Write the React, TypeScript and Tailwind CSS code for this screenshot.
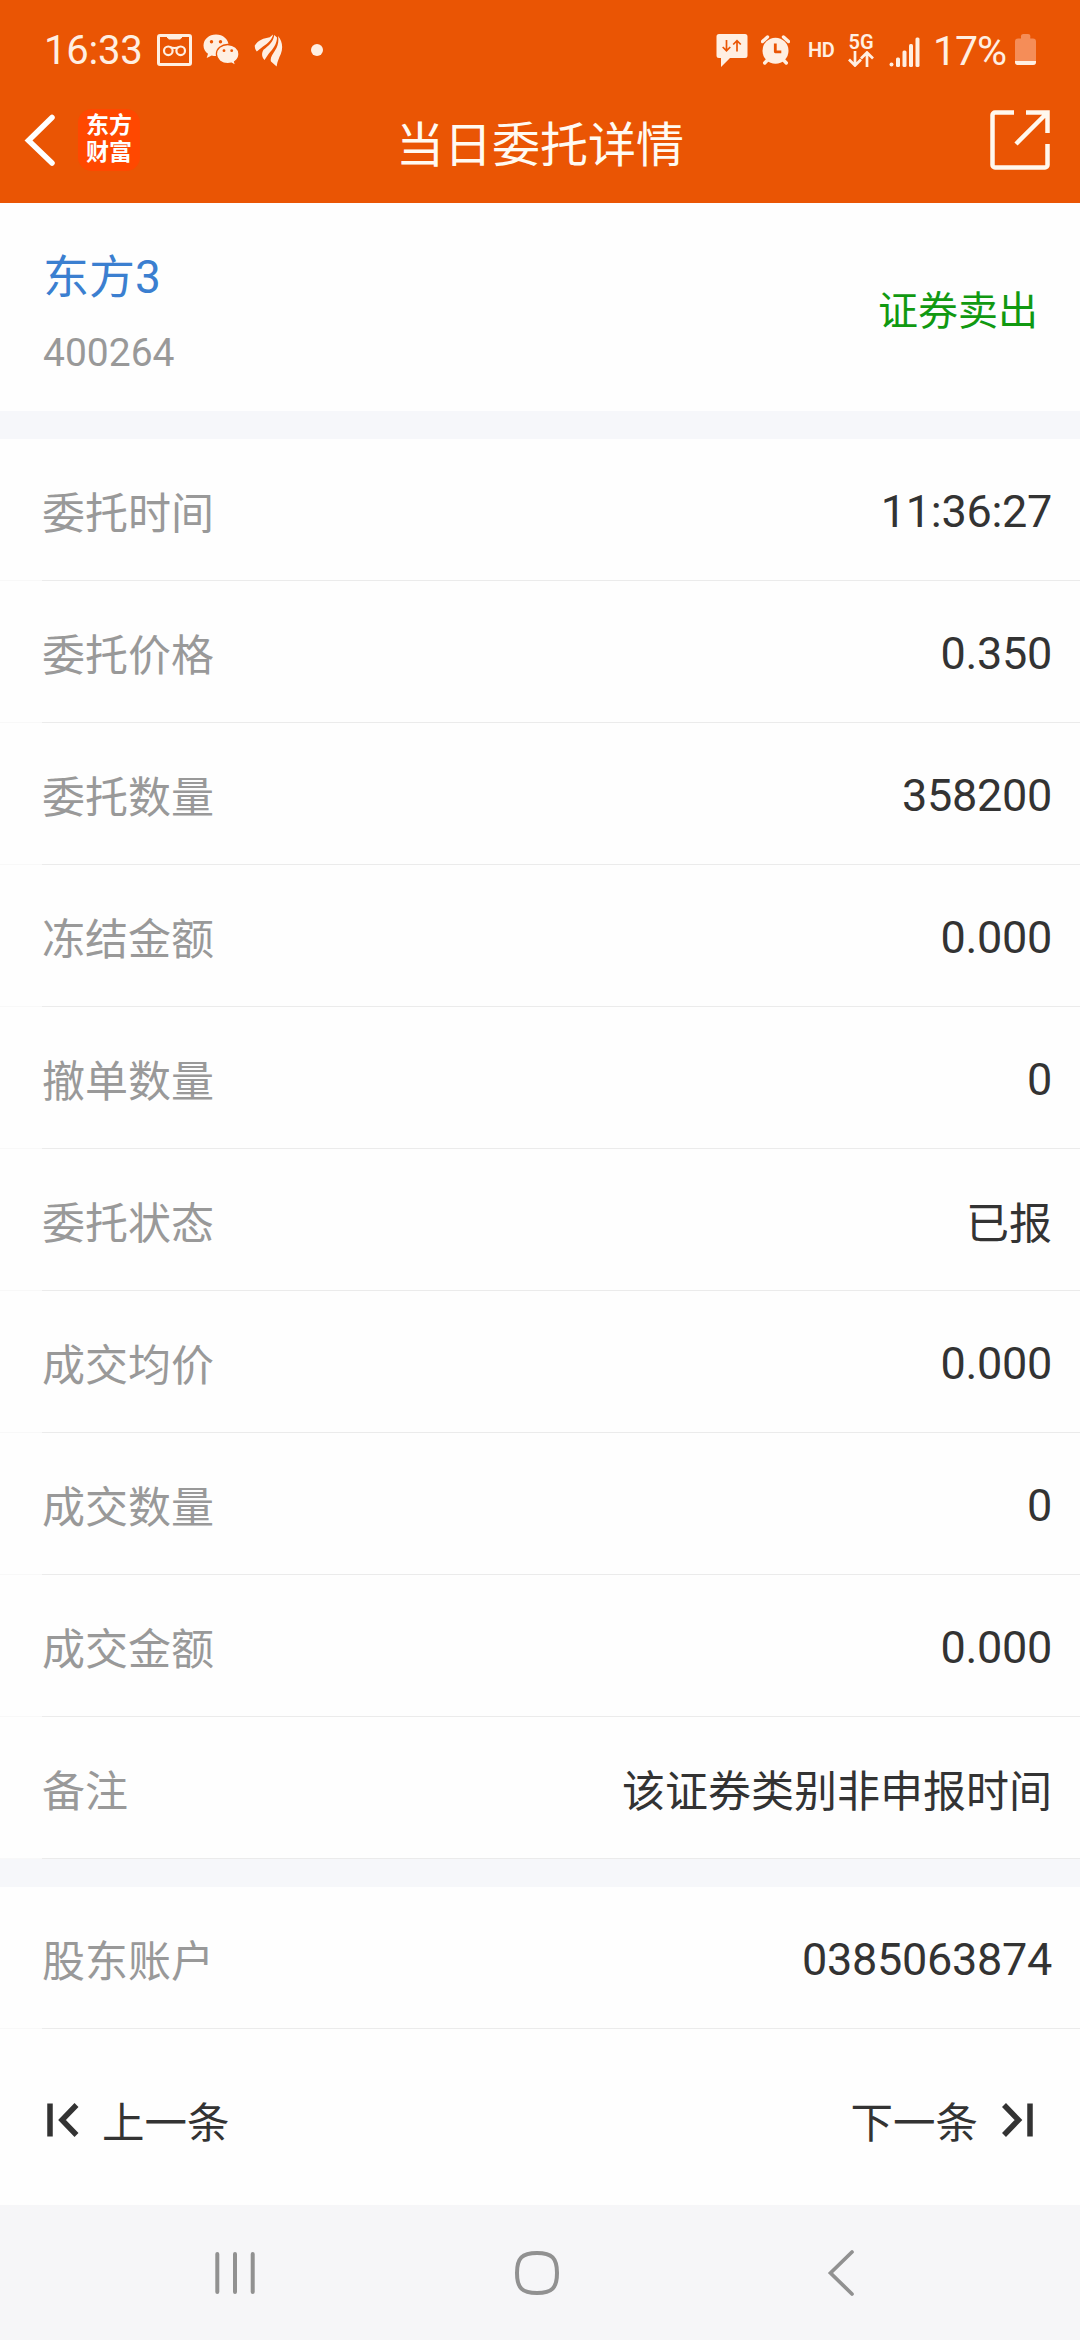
import type { ReactNode } from "react";

type Field = {
  label: string;
  value: string;
};

const orderFields: Field[] = [
  { label: "委托时间", value: "11:36:27" },
  { label: "委托价格", value: "0.350" },
  { label: "委托数量", value: "358200" },
  { label: "冻结金额", value: "0.000" },
  { label: "撤单数量", value: "0" },
  { label: "委托状态", value: "已报" },
  { label: "成交均价", value: "0.000" },
  { label: "成交数量", value: "0" },
  { label: "成交金额", value: "0.000" },
  { label: "备注", value: "该证券类别非申报时间" },
];

const hasChinese = (text: string) => /[\u4e00-\u9fff]/.test(text);

function StatusBar() {
  return (
    <div className="flex h-[100px] items-center justify-between pl-[44px] pr-[44px] text-[#ffefe2]">
      <div className="flex items-center">
        <span className="w-[113px] pt-[2px] text-[40px] leading-none tracking-[-0.2px]">16:33</span>
        {/* voicemail cassette */}
        <svg width="35" height="32" viewBox="0 0 35 32" fill="none" stroke="currentColor">
          <rect x="1.5" y="1.5" width="32" height="29" rx="1.5" strokeWidth="3" />
          <path d="M10 1h15v2.5l-2 2H12l-2-2z" fill="currentColor" stroke="none" />
          <circle cx="11.3" cy="16.8" r="4.3" strokeWidth="2.2" />
          <circle cx="23.7" cy="16.8" r="4.3" strokeWidth="2.2" />
          <path d="M13 13.2c1.5 1 7.5 1 9 0" strokeWidth="2" />
        </svg>
        {/* wechat */}
        <svg className="ml-[11px]" width="37" height="32" viewBox="0 0 37 32">
          <path
            d="M13 0.500C6 .5.500 5.300.500 11.400c0 3.500 1.800 6.300 4.500 8.300L3.700 24l5-2.600c1.400.4 2.800.6 4.300.6 7 0 12.500-4.700 12.500-10.700S20 .5 13 .5z"
            fill="currentColor"
          />
          <path
            d="M24.700 10.500c-6.300 0-11.300 4.300-11.300 9.600s5 9.600 11.300 9.600c1.300 0 2.600-.2 3.800-.5l4.200 2.300-1.100-3.700c2.700-1.800 4.400-4.600 4.400-7.700 0-5.300-5-9.600-11.300-9.600z"
            fill="currentColor"
            stroke="#ea5504"
            strokeWidth="1.3"
          />
          <circle cx="8.5" cy="7.7" r="1.7" fill="#ea5504" />
          <circle cx="17.5" cy="7.7" r="1.7" fill="#ea5504" />
          <circle cx="21" cy="16.7" r="1.4" fill="#ea5504" />
          <circle cx="28.7" cy="16.7" r="1.4" fill="#ea5504" />
        </svg>
        {/* broker plume */}
        <svg className="ml-[14px]" width="29" height="33" viewBox="0 0 29 33" fill="currentColor">
          <path d="M.8 11.500C4 6 10 4.200 15.800 3.200L19 .5C18.600 5 14 9.500 9 12.500L2.800 17.500C1.200 15.500.6 13.500.8 11.500z" />
          <path d="M20.200 1L23 3.500C23 10 19 15 14.500 20L10.500 26C7.500 23 7.500 19 9.500 15.800C15 11.500 19.500 7.500 20.200 1z" />
          <path d="M24 2C28.500 7 29.200 14 26.800 20C24.800 24.500 23.500 27 22.600 32.500L17 27.500C15.800 24 18.500 20.500 21 16.500C24 12 25 7 24 2z" />
        </svg>
        <span className="ml-[28px] size-[12px] rounded-full bg-current" />
      </div>

      <div className="flex items-center">
        {/* message with data arrows */}
        <svg width="32" height="34" viewBox="0 0 32 34">
          <path d="M3 1h26a2.500 2.500 0 0 1 2.500 2.500v19A2.500 2.500 0 0 1 29 25H14l-9 9v-9H3a2.500 2.500 0 0 1-2.500-2.500v-19A2.500 2.500 0 0 1 3 1z" fill="currentColor" />
          <path d="M10.500 7v10.500M6.700 14l3.800 3.800 3.800-3.800M21 18.500V8M17.200 11.500L21 7.700l3.800 3.800" stroke="#ea5504" strokeWidth="1.7" fill="none" />
        </svg>
        {/* alarm */}
        <svg className="ml-[13px]" width="29" height="30" viewBox="0 0 29 30">
          <path d="M1.500 6.500L6.500 2M27.500 6.500L22.500 2M7 24.500l-3.300 3.500M22 24.500l3.300 3.500" stroke="currentColor" strokeWidth="3.4" strokeLinecap="round" />
          <circle cx="14.5" cy="15.7" r="13" fill="currentColor" />
          <path d="M14.300 8.500v8.300h6" stroke="#ea5504" strokeWidth="2.8" fill="none" strokeLinejoin="round" />
        </svg>
        <span className="ml-[18px] w-[27px] text-[20px] font-semibold leading-none tracking-[-0.5px]">HD</span>
        <span className="ml-[13px] flex w-[26px] flex-col items-center">
          <span className="text-[20px] font-semibold leading-[18px]">5G</span>
          <svg width="26" height="16" viewBox="0 0 26 16" fill="none" stroke="currentColor" strokeWidth="2.7">
            <path d="M7 0v13.500M1 8.500l6 6 6-6M19 16V2M13 7.500l6-6 6 6" />
          </svg>
        </span>
        {/* signal */}
        <svg className="ml-[15px] mt-[3px]" width="31" height="30" viewBox="0 0 31 30" fill="currentColor">
          <circle cx="2.5" cy="27.5" r="2" />
          <rect x="7" y="20.5" width="4" height="9.5" rx="1.5" />
          <rect x="13.5" y="13.5" width="4" height="16.5" rx="1.5" />
          <rect x="20" y="7" width="4" height="23" rx="1.5" />
          <rect x="26.5" y="0.5" width="4" height="29.5" rx="1.5" />
        </svg>
        <span className="ml-[13px] w-[80px] pt-[2px] text-[41px] leading-none tracking-[-1px]">17%</span>
        {/* battery */}
        <svg className="ml-[2px]" width="21" height="32" viewBox="0 0 21 32">
          <path d="M6 3a2.500 2.500 0 0 1 2-3h5a2.500 2.500 0 0 1 2.300 3v1.500H18a3 3 0 0 1 3 3V28a3 3 0 0 1-3 3H3a3 3 0 0 1-3-3V7.500a3 3 0 0 1 3-3h3z" fill="#f58d58" />
          <path d="M0 27h21v1a3 3 0 0 1-3 3H3a3 3 0 0 1-3-3z" fill="currentColor" />
        </svg>
      </div>
    </div>
  );
}

function TitleBar() {
  return (
    <div className="flex h-[79px] items-center justify-between pl-[24px] pr-[30px]">
      <div className="flex w-[126px] items-center">
        <svg width="32" height="52" viewBox="0 0 32 52" fill="none" stroke="#fff" strokeWidth="5.5" strokeLinecap="round">
          <path d="M28 3.500L4.500 26.500 28 49" />
        </svg>
        <div className="ml-[22px] flex size-[62px] flex-col items-center justify-center rounded-[14px] bg-[#ff4800] pb-[2px] text-[23px] font-bold leading-[27px] text-white">
          <span>东方</span>
          <span>财富</span>
        </div>
      </div>
      <h1 className="mt-[13px] text-[48px] leading-none text-[#fffaf2]">当日委托详情</h1>
      <div className="flex w-[120px] justify-end">
        <svg width="60" height="60" viewBox="0 0 60 60" fill="none" stroke="#fff8ee" strokeWidth="4.5">
          <path d="M24 2.500H5A2.500 2.500 0 0 0 2.500 5v50A2.500 2.500 0 0 0 5 57.500h50a2.500 2.500 0 0 0 2.500-2.500V34" />
          <path d="M36 2.500h21.500V23M57 3L26 34" />
        </svg>
      </div>
    </div>
  );
}

function FieldRow({ label, value }: Field) {
  return (
    <li className="flex h-[142px]">
      <div className="w-[42px] border-b border-[#f8f8f8]" />
      <div className="flex flex-1 items-center justify-between border-b border-[#ebebeb] pr-[28px]">
        <span className="pt-[9px] text-[43px] leading-none text-[#999]">{label}</span>
        {hasChinese(value) ? (
          <span className="pt-[9px] text-[43px] leading-none text-[#333]">{value}</span>
        ) : (
          <span className="pt-[4px] text-[45px] leading-none tracking-[-0.3px] text-[#333]">{value}</span>
        )}
      </div>
    </li>
  );
}

function PagerButton({ children }: { children: ReactNode }) {
  return <button className="flex items-center text-[42.5px] leading-none text-[#333]">{children}</button>;
}

function Pager() {
  return (
    <div className="flex h-[176px] items-center justify-between pl-[44px] pr-[46px]">
      <PagerButton>
        <svg className="mt-[6px]" width="35" height="34" viewBox="0 0 35 34" fill="none" stroke="#333" strokeWidth="5.5">
          <path d="M6 .5v33M32.500 2L18 17l14.500 15" />
        </svg>
        <span className="ml-[23px] mt-[15px]">上一条</span>
      </PagerButton>
      <PagerButton>
        <span className="mr-[23px] mt-[15px]">下一条</span>
        <svg className="mt-[6px]" width="33" height="34" viewBox="0 0 33 34" fill="none" stroke="#333" strokeWidth="5.5">
          <path d="M29 .5v33M3 2l14.500 15L3 32" />
        </svg>
      </PagerButton>
    </div>
  );
}

function NavigationBar() {
  return (
    <nav className="flex h-[135px] items-center bg-[#f6f6f8] pl-[213px] pt-[1px] text-[#919191]">
      <svg width="44" height="44" viewBox="0 0 44 44" stroke="currentColor" strokeWidth="4" strokeLinecap="round">
        <path d="M4.300 3v38M22 3v38M39.700 3v38" />
      </svg>
      <svg className="ml-[257px]" width="46" height="46" viewBox="0 0 46 46" fill="none" stroke="currentColor" strokeWidth="4">
        <path d="M23 3C38 3 43 8 43 23S38 43 23 43 3 38 3 23 8 3 23 3z" />
      </svg>
      <svg className="ml-[267px]" width="28" height="48" viewBox="0 0 28 48" fill="none" stroke="currentColor" strokeWidth="3.7" strokeLinecap="round">
        <path d="M25 3L3.500 24 25 45" />
      </svg>
    </nav>
  );
}

export default function App() {
  return (
    <div className="h-[2340px] w-[1080px] overflow-hidden bg-[#fefefe] font-[Roboto,'Noto_Sans_CJK_SC',sans-serif]">
      <header className="h-[203px] bg-[#ea5504]">
        <StatusBar />
        <TitleBar />
      </header>

      <section className="flex h-[208px] items-center justify-between pl-[43px] pr-[42px]">
        <div className="flex flex-col gap-[33px] pt-[12px]">
          <span className="text-[46px] leading-[46px] text-[#3b7fd0]">东方3</span>
          <span className="text-[39px] leading-[40px] text-[#999]">400264</span>
        </div>
        <span className="pt-[9px] text-[40px] leading-none text-[#119911]">证券卖出</span>
      </section>

      <div className="h-[28px] bg-[#f6f7fa]" />
      <ul>
        {orderFields.map((field) => (
          <FieldRow key={field.label} {...field} />
        ))}
      </ul>
      <div className="h-[28px] bg-[#f6f7fa]" />
      <ul>
        <FieldRow label="股东账户" value="0385063874" />
      </ul>

      <Pager />
      <NavigationBar />
    </div>
  );
}
